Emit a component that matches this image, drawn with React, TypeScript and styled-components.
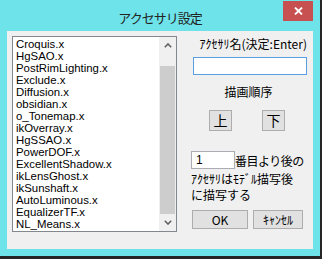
import styled, { createGlobalStyle } from "styled-components";

const GlobalStyle = createGlobalStyle`
  html, body {
    margin: 0;
    padding: 0;
    background: #262626;
  }
  body {
    width: 322px;
    height: 259px;
    overflow: hidden;
    font-family: "Noto Sans CJK JP", "Noto Sans", sans-serif;
    color: #000;
  }
`;

const items = [
  "Croquis.x",
  "HgSAO.x",
  "PostRimLighting.x",
  "Exclude.x",
  "Diffusion.x",
  "obsidian.x",
  "o_Tonemap.x",
  "ikOverray.x",
  "HgSSAO.x",
  "PowerDOF.x",
  "ExcellentShadow.x",
  "ikLensGhost.x",
  "ikSunshaft.x",
  "AutoLuminous.x",
  "EqualizerTF.x",
  "NL_Means.x",
];

function Chevron({ down }: { down?: boolean }) {
  return (
    <svg width="8" height="5" viewBox="0 0 8 5">
      <path
        d={down ? "M0.8 0.8 L4 4 L7.2 0.8" : "M0.8 4.2 L4 1 L7.2 4.2"}
        fill="none"
        stroke="#606060"
        strokeWidth="1.6"
      />
    </svg>
  );
}

function App() {
  return (
    <>
      <GlobalStyle />
      <Window>
        <TitleBar>
          <span />
          <Title>アクセサリ設定</Title>
          <CloseButton>
            <svg width="9" height="8" viewBox="0 0 9 8">
              <path d="M1 0.5 L8 7.5 M8 0.5 L1 7.5" stroke="#fff" strokeWidth="1.8" />
            </svg>
          </CloseButton>
        </TitleBar>
        <Client>
          <ListBox>
            <Items>
              {items.map((name) => (
                <Item key={name}>{name}</Item>
              ))}
            </Items>
            <ScrollBar>
              <ArrowButton>
                <Chevron />
              </ArrowButton>
              <Track />
              <Thumb />
              <ArrowButton>
                <Chevron down />
              </ArrowButton>
            </ScrollBar>
          </ListBox>
          <Side>
            <Label>ｱｸｾｻﾘ名(決定:Enter)</Label>
            <NameInput />
            <Heading>描画順序</Heading>
            <OrderRow>
              <OrderButton>上</OrderButton>
              <OrderButton>下</OrderButton>
            </OrderRow>
            <IndexRow>
              <IndexInput>1</IndexInput>
              <span>番目より後の</span>
            </IndexRow>
            <Note>
              ｱｸｾｻﾘはﾓﾃﾞﾙ描写後
              <br />
              に描写する
            </Note>
            <ActionRow>
              <ActionButton $w={56}>OK</ActionButton>
              <ActionButton $w={50}>ｷｬﾝｾﾙ</ActionButton>
            </ActionRow>
          </Side>
        </Client>
      </Window>
    </>
  );
}

const Window = styled.div`
  width: 320px;
  height: 256px;
  background: #6ee3ea;
  display: flex;
  flex-direction: column;
`;

const TitleBar = styled.div`
  height: 31px;
  display: grid;
  grid-template-columns: 1fr auto 1fr;
  align-items: start;
`;

const Title = styled.div`
  margin-top: 10px;
  font-size: 13px;
  line-height: 16px;
  letter-spacing: -1px;
  color: #222;
`;

const CloseButton = styled.div`
  justify-self: end;
  margin-top: 1px;
  margin-right: 7px;
  width: 30px;
  height: 20px;
  background: #c75050;
  display: flex;
  align-items: center;
  justify-content: center;
`;

const Client = styled.div`
  margin: 0 7px;
  height: 218px;
  background: #f0f0f0;
  display: flex;
  padding: 5px 0 0 5px;
  box-sizing: border-box;
`;

const ListBox = styled.div`
  width: 165px;
  height: 196px;
  box-sizing: border-box;
  border: 1px solid #828790;
  background: #fff;
  display: flex;
`;

const Items = styled.div`
  flex: 1;
  padding: 1px 0 0 3px;
  overflow: hidden;
`;

const Item = styled.div`
  font-family: "Liberation Sans", Arial, sans-serif;
  font-size: 11.4px;
  line-height: 12px;
  height: 12px;
  white-space: nowrap;
`;

const ScrollBar = styled.div`
  width: 17px;
  background: #f0f0f0;
  display: flex;
  flex-direction: column;
`;

const ArrowButton = styled.div`
  height: 17px;
  display: flex;
  align-items: center;
  justify-content: center;
`;

const Track = styled.div`
  height: 12px;
`;

const Thumb = styled.div`
  flex: 1;
  margin: 0 1px;
  background: #cdcdcd;
`;

const Side = styled.div`
  display: flex;
  flex-direction: column;
  padding-left: 16px;
  width: 114px;
`;

const Label = styled.div`
  margin-top: 2px;
  font-size: 12px;
  line-height: 12px;
  text-align: right;
  white-space: nowrap;
`;

const NameInput = styled.div`
  margin-top: 7px;
  height: 18px;
  box-sizing: border-box;
  border: 1px solid #5a9fe2;
  background: #fff;
`;

const Heading = styled.div`
  margin-top: 11px;
  font-size: 12px;
  line-height: 12px;
  text-align: center;
  padding-right: 3px;
`;

const OrderRow = styled.div`
  display: flex;
  gap: 30px;
  margin-top: 12px;
  padding-left: 16px;
`;

const OrderButton = styled.div`
  width: 23px;
  height: 21px;
  box-sizing: border-box;
  border: 1px solid #adadad;
  background: #e1e1e1;
  font-size: 14px;
  line-height: 19px;
  text-align: center;
`;

const IndexRow = styled.div`
  display: flex;
  align-items: center;
  margin-top: 20px;
  margin-left: -2px;
  font-size: 12px;
  white-space: nowrap;
  letter-spacing: -0.5px;
`;

const IndexInput = styled.div`
  width: 44px;
  height: 18px;
  box-sizing: border-box;
  border: 1px solid #abadb3;
  background: #fff;
  padding-left: 4px;
  font-family: "Liberation Sans", Arial, sans-serif;
  font-size: 12px;
  line-height: 16px;
  letter-spacing: 0;
`;

const Note = styled.div`
  margin-top: 2px;
  margin-left: -2px;
  font-size: 12px;
  line-height: 16px;
  white-space: nowrap;
`;

const ActionRow = styled.div`
  display: flex;
  gap: 5px;
  margin-top: 7px;
  margin-left: -1px;
`;

const ActionButton = styled.div<{ $w: number }>`
  width: ${(p) => p.$w}px;
  height: 19px;
  box-sizing: border-box;
  border: 1px solid #adadad;
  background: #e1e1e1;
  font-size: 12px;
  line-height: 17px;
  text-align: center;
  white-space: nowrap;
`;

export default App;
